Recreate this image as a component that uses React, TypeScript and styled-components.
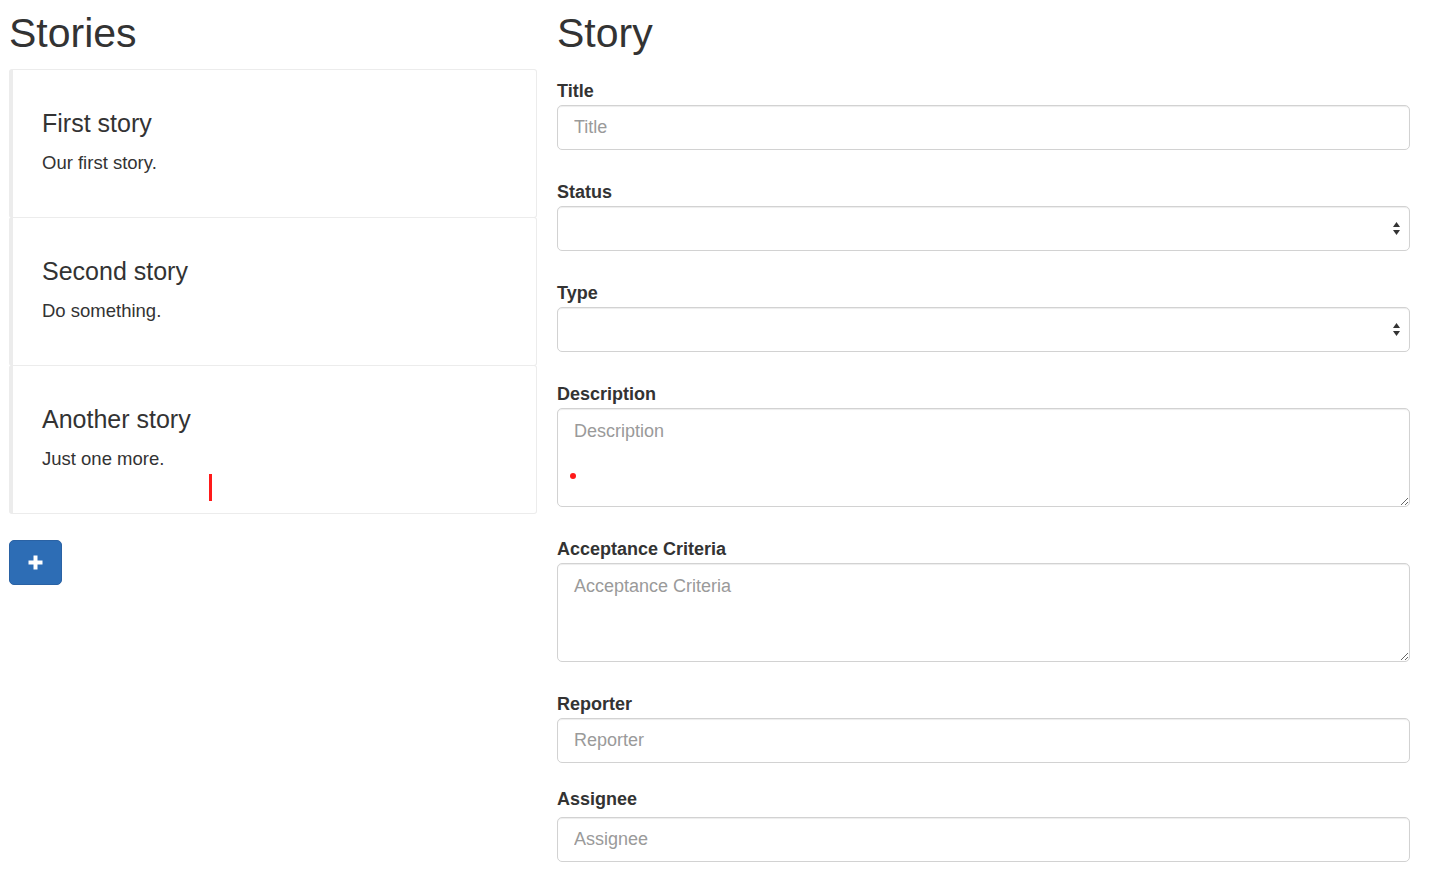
import React from 'react';
import styled, { createGlobalStyle } from 'styled-components';

const GlobalStyle = createGlobalStyle`
  html, body {
    margin: 0;
    padding: 0;
    background: #ffffff;
  }
  body {
    font-family: "Liberation Sans", Arial, Helvetica, sans-serif;
    color: #333333;
  }
  * {
    box-sizing: border-box;
  }
`;

const Page = styled.div`
  display: grid;
  grid-template-columns: 528px 1fr;
  column-gap: 20px;
  padding: 0 20px 0 9px;
  width: 1430px;
`;

const Column = styled.div`
  display: flex;
  flex-direction: column;
  align-items: stretch;
`;

const Heading = styled.h1`
  font-size: 41px;
  font-weight: 500;
  line-height: 44px;
  margin: 11px 0 0 0;
  color: #333333;
`;

const StoryList = styled.div`
  display: flex;
  flex-direction: column;
  margin-top: 14px;
`;

const Card = styled.div`
  position: relative;
  height: 149px;
  padding: 40px 30px 0 29px;
  background: #ffffff;
  border: 1px solid #ececec;
  border-left: 4px solid #ececec;
  border-radius: 3px;
  & + & {
    margin-top: -1px;
  }
`;

const CardTitle = styled.h4`
  margin: 0 0 13px 0;
  font-size: 25px;
  font-weight: normal;
  line-height: 27px;
  color: #333333;
`;

const CardText = styled.p`
  margin: 0;
  font-size: 18.5px;
  line-height: 25px;
  color: #333333;
`;

const Caret = styled.span`
  position: absolute;
  left: 196px;
  top: 108px;
  width: 3px;
  height: 27px;
  background: #ff1a1a;
`;

const AddButton = styled.button`
  display: flex;
  align-items: center;
  justify-content: center;
  width: 53px;
  height: 45px;
  margin-top: 26px;
  padding: 0;
  background: #2d6db5;
  border: 1px solid #2a62a4;
  border-radius: 5px;
  cursor: pointer;
`;

const Form = styled.form`
  display: flex;
  flex-direction: column;
  margin-top: 25px;
`;

const FormGroup = styled.div<{ $after?: number }>`
  position: relative;
  display: flex;
  flex-direction: column;
  margin-bottom: ${(p) => (p.$after ?? 31)}px;
`;

const Label = styled.label<{ $space?: number }>`
  font-size: 18px;
  font-weight: bold;
  line-height: 22px;
  margin-bottom: ${(p) => (p.$space ?? 3)}px;
  color: #333333;
`;

const fieldBase = `
  width: 100%;
  font-family: "Liberation Sans", Arial, Helvetica, sans-serif;
  font-size: 18px;
  color: #555555;
  background: #ffffff;
  border: 1.5px solid #d2d2d2;
  border-radius: 5px;
  box-shadow: inset 0 1px 1px rgba(0, 0, 0, 0.075);
  outline: none;
  &::placeholder {
    color: #9a9a9a;
  }
`;

const Input = styled.input`
  ${fieldBase}
  height: 45px;
  padding: 0 16px;
`;

const TextArea = styled.textarea`
  ${fieldBase}
  height: 99px;
  padding: 10px 16px;
  line-height: 24px;
  resize: vertical;
  display: block;
`;

const FieldWrap = styled.div`
  position: relative;
`;

const Select = styled.select`
  ${fieldBase}
  height: 45px;
  padding: 0 16px;
  appearance: none;
  -webkit-appearance: none;
`;

const SelectArrows = styled.svg`
  position: absolute;
  right: 9px;
  top: 15px;
  pointer-events: none;
`;

const Dot = styled.span`
  position: absolute;
  left: 13px;
  top: 65px;
  width: 6px;
  height: 6px;
  border-radius: 50%;
  background: #ff1a1a;
`;

const stories = [
  { title: 'First story', text: 'Our first story.' },
  { title: 'Second story', text: 'Do something.' },
  { title: 'Another story', text: 'Just one more.' },
];

const Arrows = () => (
  <SelectArrows width="9" height="15" viewBox="0 0 9 15">
    <path d="M4.5 1 L8 6 L1 6 Z" fill="#333" />
    <path d="M4.5 14 L8 9 L1 9 Z" fill="#333" />
  </SelectArrows>
);

const App: React.FC = () => {
  return (
    <>
      <GlobalStyle />
      <Page>
        <Column>
          <Heading>Stories</Heading>
          <StoryList>
            {stories.map((s, i) => (
              <Card key={s.title}>
                <CardTitle>{s.title}</CardTitle>
                <CardText>{s.text}</CardText>
                {i === 2 && <Caret />}
              </Card>
            ))}
          </StoryList>
          <div>
            <AddButton type="button" aria-label="Add story">
              <svg width="17" height="17" viewBox="0 0 17 17">
                <path d="M8.5 1.5 V15.5 M1.5 8.5 H15.5" stroke="#fff" strokeWidth="4" />
              </svg>
            </AddButton>
          </div>
        </Column>

        <Column>
          <Heading>Story</Heading>
          <Form onSubmit={(e) => e.preventDefault()}>
            <FormGroup>
              <Label>Title</Label>
              <Input placeholder="Title" />
            </FormGroup>
            <FormGroup>
              <Label>Status</Label>
              <FieldWrap>
                <Select defaultValue="">
                  <option value=""></option>
                </Select>
                <Arrows />
              </FieldWrap>
            </FormGroup>
            <FormGroup>
              <Label>Type</Label>
              <FieldWrap>
                <Select defaultValue="">
                  <option value=""></option>
                </Select>
                <Arrows />
              </FieldWrap>
            </FormGroup>
            <FormGroup>
              <Label>Description</Label>
              <FieldWrap>
                <TextArea placeholder="Description" />
                <Dot />
              </FieldWrap>
            </FormGroup>
            <FormGroup>
              <Label>Acceptance Criteria</Label>
              <TextArea placeholder="Acceptance Criteria" />
            </FormGroup>
            <FormGroup $after={25}>
              <Label $space={3}>Reporter</Label>
              <Input placeholder="Reporter" />
            </FormGroup>
            <FormGroup $after={0}>
              <Label $space={7}>Assignee</Label>
              <Input placeholder="Assignee" />
            </FormGroup>
          </Form>
        </Column>
      </Page>
    </>
  );
};

export default App;
